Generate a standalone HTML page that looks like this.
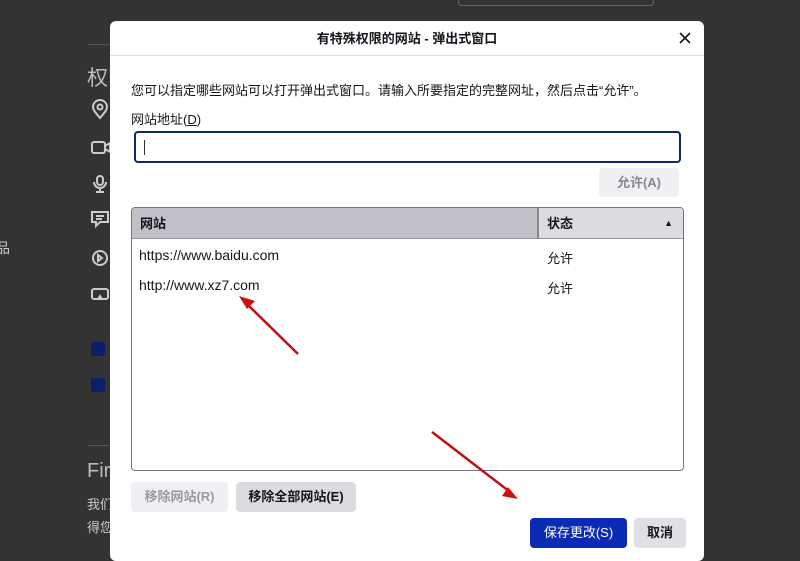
<!DOCTYPE html>
<html><head><meta charset="utf-8"><style>
*{margin:0;padding:0;box-sizing:border-box}
body{width:800px;height:542px;background:#333;position:relative;overflow:hidden;font-family:"Liberation Sans","Noto Sans CJK SC",sans-serif;color:#15141a}
.a{position:absolute}
.dk{color:#ccc}
</style></head><body>
<div class="a" style="left:458px;top:-4px;width:196px;height:10px;border:1px solid #666;border-radius:4px"></div>
<div class="a" style="left:88px;top:44px;width:30px;height:1px;background:#555"></div>
<div class="a dk" style="left:87px;top:62px;font-size:21px;color:#bbb">权限</div>
<svg class="a" style="left:88px;top:98px" width="30" height="210" fill="none" stroke="#ccc" stroke-width="2">
<path d="M12 20c-5-6-7-8-7-11a7 7 0 0 1 14 0c0 3-2 5-7 11z"/><circle cx="12" cy="9" r="2.5"/>
<rect x="4" y="44" width="13" height="11" rx="2"/><path d="M17 48l5-3v9l-5-3"/>
<rect x="9" y="78" width="6" height="9" rx="3"/><path d="M6 84a6 6 0 0 0 12 0M12 90v4M8 94h8"/>
<path d="M4 114h16v10h-8l-4 4v-4H4z"/><path d="M8 118h8M8 121h6"/>
<circle cx="12" cy="160" r="7"/><path d="M10 157l4 3-4 3z"/>
<rect x="4" y="191" width="16" height="10" rx="2"/><path d="M10 201l2-3 2 3"/>
</svg>
<div class="a dk" style="left:-4px;top:238px;font-size:14px">品</div>
<div class="a" style="left:91px;top:342px;width:14px;height:14px;background:#0b1f66;border-radius:2px"></div>
<div class="a" style="left:91px;top:378px;width:14px;height:14px;background:#0b1f66;border-radius:2px"></div>
<div class="a" style="left:88px;top:445px;width:30px;height:1px;background:#555"></div>
<div class="a dk" style="left:87px;top:460px;font-size:20px;color:#bbb">Fire</div>
<div class="a dk" style="left:87px;top:494px;font-size:13px">我们</div>
<div class="a dk" style="left:87px;top:517px;font-size:13px">得您</div>

<div class="a" style="left:110px;top:21px;width:594px;height:540px;background:#fff;border-radius:6px">
 <div class="a" style="left:0;top:0;width:594px;height:35px;border-bottom:1px solid #ddd;text-align:center;font-size:13px;font-weight:bold;line-height:35px">有特殊权限的网站 - 弹出式窗口</div>
 <svg class="a" style="left:569px;top:11px" width="12" height="12" stroke="#15141a" stroke-width="1.6"><path d="M1 1L11 11M11 1L1 11"/></svg>
 <div class="a" style="left:21px;top:59px;font-size:13px">您可以指定哪些网站可以打开弹出式窗口。请输入所要指定的完整网址，然后点击“允许”。</div>
 <div class="a" style="left:21px;top:88px;font-size:13px">网站地址(<u>D</u>)</div>
 <div class="a" style="left:24px;top:110px;width:547px;height:32px;border:2px solid #0b2a66;border-radius:4px"><div style="position:absolute;left:8px;top:7px;width:1px;height:15px;background:#333"></div></div>
 <div class="a" style="left:489px;top:147px;width:80px;height:29px;background:#f0f0f4;border-radius:4px;color:#888;font-size:13px;font-weight:bold;text-align:center;line-height:29px">允许(A)</div>
 <div class="a" style="left:21px;top:186px;width:553px;height:264px;border:1px solid #777;border-radius:4px;overflow:hidden">
  <div class="a" style="left:0;top:0;width:405px;height:31px;background:#c1c0c8;border-bottom:1px solid #999;font-size:13px;font-weight:bold;line-height:31px;padding-left:8px">网站</div>
  <div class="a" style="left:405px;top:0;width:148px;height:31px;background:#dcdce0;border-bottom:1px solid #999;border-left:2px solid #888;font-size:13px;font-weight:bold;line-height:31px;padding-left:8px">状态<span style="position:absolute;right:12px;font-size:9px">▲</span></div>
  <div class="a" style="left:7px;top:39px;font-size:14px">https://www.baidu.com</div>
  <div class="a" style="left:415px;top:40px;font-size:13px">允许</div>
  <div class="a" style="left:7px;top:69px;font-size:14px">http://www.xz7.com</div>
  <div class="a" style="left:415px;top:70px;font-size:13px">允许</div>
 </div>
 <div class="a" style="left:21px;top:461px;width:97px;height:30px;background:#f0f0f4;border-radius:4px;color:#999;font-size:13px;font-weight:bold;text-align:center;line-height:30px">移除网站(R)</div>
 <div class="a" style="left:126px;top:461px;width:120px;height:30px;background:#dcdce0;border-radius:4px;font-size:13px;font-weight:bold;text-align:center;line-height:30px">移除全部网站(E)</div>
 <div class="a" style="left:420px;top:497px;width:97px;height:30px;background:#0b2bb4;border-radius:4px;color:#fff;font-size:13px;text-align:center;line-height:30px">保存更改(S)</div>
 <div class="a" style="left:524px;top:497px;width:52px;height:30px;background:#e0e0e4;border-radius:4px;font-size:13px;font-weight:bold;text-align:center;line-height:30px">取消</div>
</div>
<svg class="a" style="left:0;top:0" width="800" height="542">
<path d="M298 354L247 304" stroke="#c01010" stroke-width="2.5"/><path d="M239 296l16 5-8 8z" fill="#d01010"/>
<path d="M432 432L510 492" stroke="#c01010" stroke-width="2.5"/><path d="M518 499l-16-3 6-9z" fill="#d01010"/>
</svg>
</body></html>
